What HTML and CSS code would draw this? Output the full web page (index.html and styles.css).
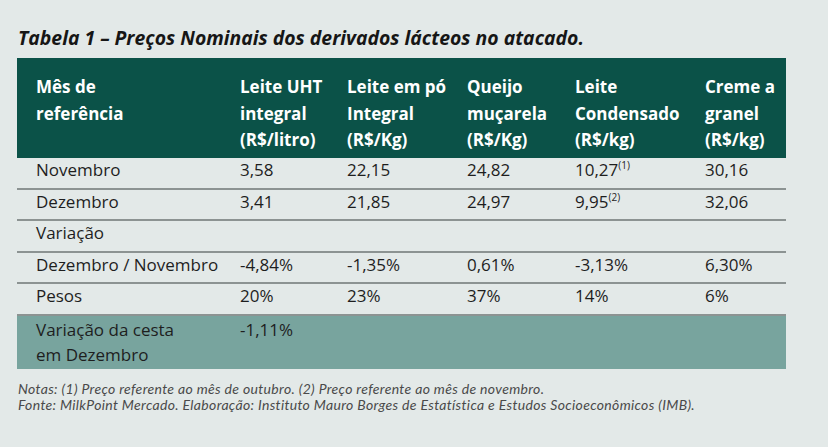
FILE: index.html
```html
<!DOCTYPE html>
<html lang="pt">
<head>
<meta charset="utf-8">
<title>Tabela 1</title>
<link rel="stylesheet" href="styles.css">
</head>
<body>
<div class="page">
  <h1 class="title">Tabela 1 – Preços Nominais dos derivados lácteos no atacado.</h1>
  <table class="prices">
    <colgroup>
      <col class="c1"><col class="c2"><col class="c3"><col class="c4"><col class="c5"><col class="c6">
    </colgroup>
    <thead>
      <tr>
        <th>Mês de<br>referência</th>
        <th>Leite UHT<br>integral<br>(R$/litro)</th>
        <th>Leite em pó<br>Integral<br>(R$/Kg)</th>
        <th>Queijo<br>muçarela<br>(R$/Kg)</th>
        <th>Leite<br>Condensado<br>(R$/kg)</th>
        <th>Creme a<br>granel<br>(R$/kg)</th>
      </tr>
    </thead>
    <tbody>
      <tr><td>Novembro</td><td>3,58</td><td>22,15</td><td>24,82</td><td>10,27<sup>(1)</sup></td><td>30,16</td></tr>
      <tr><td>Dezembro</td><td>3,41</td><td>21,85</td><td>24,97</td><td>9,95<sup>(2)</sup></td><td>32,06</td></tr>
      <tr><td>Variação</td><td></td><td></td><td></td><td></td><td></td></tr>
      <tr><td>Dezembro / Novembro</td><td>-4,84%</td><td>-1,35%</td><td>0,61%</td><td>-3,13%</td><td>6,30%</td></tr>
      <tr><td>Pesos</td><td>20%</td><td>23%</td><td>37%</td><td>14%</td><td>6%</td></tr>
      <tr class="total"><td>Variação da cesta<br>em Dezembro</td><td>-1,11%</td><td></td><td></td><td></td><td></td></tr>
    </tbody>
  </table>
  <div class="notes">
    <p>Notas: (1) Preço referente ao mês de outubro. (2) Preço referente ao mês de novembro.</p>
    <p>Fonte: MilkPoint Mercado. Elaboração: Instituto Mauro Borges de Estatística e Estudos Socioeconômicos (IMB).</p>
  </div>
</div>
</body>
</html>
```

FILE: styles.css
```css
html, body {
  margin: 0;
  padding: 0;
  background: #e3e9e8;
}
body {
  width: 828px;
  height: 447px;
  overflow: hidden;
  font-family: "Open Sans", "Noto Sans", sans-serif;
  color: #1e1e1e;
}
.page {
  padding: 26px 0 0 17px;
}
.title {
  margin: 0 0 0 1px;
  font-size: 19.4px;
  line-height: 24px;
  font-weight: 700;
  font-style: italic;
  color: #161616;
  height: 32px;
}
.prices {
  border-collapse: collapse;
  table-layout: fixed;
  width: 769px;
  font-size: 17px;
}
.c1 { width: 215px; }
.c2 { width: 107px; }
.c3 { width: 120px; }
.c4 { width: 108px; }
.c5 { width: 130px; }
.c6 { width: 89px; }
.prices th {
  background: #0b5248;
  color: #ffffff;
  font-weight: 700;
  text-align: left;
  vertical-align: top;
  line-height: 26.5px;
  padding: 16px 0 4.5px 8px;
  white-space: nowrap;
}
.prices th:first-child,
.prices td:first-child {
  padding-left: 19px;
}
.prices td {
  line-height: 24px;
  padding: 0 0 5.5px 8px;
  border-bottom: 2px solid #8c9392;
  white-space: nowrap;
  vertical-align: top;
}
.prices sup {
  font-size: 10px;
  line-height: 0;
  vertical-align: 7px;
}
.prices .total td {
  background: #78a49e;
  border-bottom: none;
  line-height: 25px;
  padding-top: 1.5px;
  padding-bottom: 1.5px;
}
.notes {
  margin-top: 12px;
  margin-left: 1px;
  font-family: Lato, "Open Sans", sans-serif;
  font-size: 14px;
  letter-spacing: 0.33px;
  font-style: italic;
  line-height: 16.8px;
  color: #4a4a4a;
}
.notes p {
  margin: 0;
}
```
